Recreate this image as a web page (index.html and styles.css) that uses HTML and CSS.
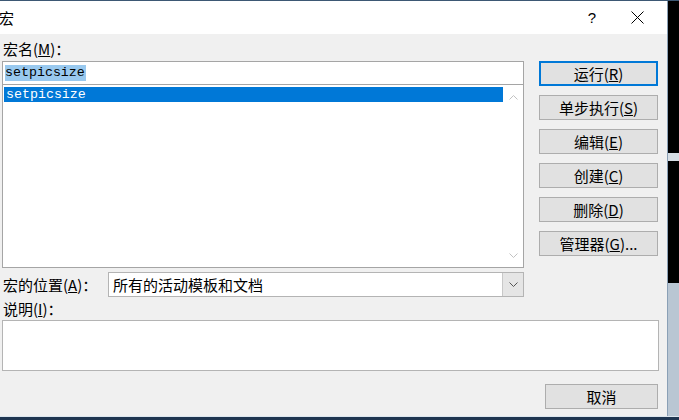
FILE: index.html
```html
<!DOCTYPE html>
<html lang="zh-CN">
    <head>
        <meta charset="utf-8">
        <title>宏</title>
        <link rel="stylesheet" href="styles.css">
    </head>
    <body>
        <div class="screen">
            <div class="dialog">
                <div class="titlebar">
                    <span class="title">宏</span>
                    <span class="help">?</span>
                    <span class="close">
                        <svg width="13" height="13" viewBox="0 0 13 13"><path d="M0.5 0.5 L12.5 12.5 M12.5 0.5 L0.5 12.5" stroke="#000" stroke-width="1" fill="none"/></svg>
                    </span>
                </div>

                <div class="content">
                    <div class="top">
                        <div class="left">
                            <div class="label label-name">宏名(<u>M</u>)：</div>
                            <div class="input">
                                <span class="sel-text">setpicsize</span>
                            </div>
                            <div class="list">
                                <div class="list-items">
                                    <div class="list-row selected">setpicsize</div>
                                </div>
                                <div class="scrollbar">
                                    <svg class="arrow" width="9" height="5" viewBox="0 0 9 5"><path d="M0.5 4.5 L4.5 0.5 L8.5 4.5" stroke="#c2c2c2" fill="none"/></svg>
                                    <svg class="arrow" width="9" height="5" viewBox="0 0 9 5"><path d="M0.5 0.5 L4.5 4.5 L8.5 0.5" stroke="#c2c2c2" fill="none"/></svg>
                                </div>
                            </div>
                            <div class="location">
                                <span class="label">宏的位置(<u>A</u>)：</span>
                                <div class="combo">
                                    <span class="combo-text">所有的活动模板和文档</span>
                                    <span class="combo-btn">
                                        <svg width="9" height="5" viewBox="0 0 9 5"><path d="M0.5 0.5 L4.5 4.5 L8.5 0.5" stroke="#555" fill="none"/></svg>
                                    </span>
                                </div>
                            </div>
                        </div>

                        <div class="buttons">
                            <button class="btn default">运行(<u>R</u>)</button>
                            <button class="btn">单步执行(<u>S</u>)</button>
                            <button class="btn">编辑(<u>E</u>)</button>
                            <button class="btn">创建(<u>C</u>)</button>
                            <button class="btn">删除(<u>D</u>)</button>
                            <button class="btn">管理器(<u>G</u>)...</button>
                        </div>
                    </div>

                    <div class="label label-desc">说明(<u>I</u>)：</div>
                    <div class="desc"></div>

                    <div class="footer">
                        <button class="btn cancel">取消</button>
                    </div>
                </div>
            </div>

            <div class="backdrop">
                <div class="backdrop-dark"></div>
                <div class="backdrop-light"></div>
            </div>
        </div>
        <div class="taskbar"></div>
    </body>
</html>
```

FILE: styles.css
```css
/* 全体 */
body {
    margin: 0;
    padding: 0;
    width: 679px;
    height: 420px;
    overflow: hidden;
    background: #1e3550;
    font-family: "Noto Sans CJK SC", sans-serif;
    font-size: 15px;
    color: #000;
}

.screen {
    display: flex;
    height: 416px;
    border-top: 1px solid #3d5874;
    box-sizing: border-box;
}

/* ダイアログ */
.dialog {
    width: 668px;
    background: #f0f0f0;
    border-right: 1px solid #8aa0b6;
    box-sizing: border-box;
    display: flex;
    flex-direction: column;
}

.titlebar {
    height: 33px;
    background: #fff;
    display: flex;
    align-items: center;
    flex-shrink: 0;
}

.title {
    font-size: 15px;
    margin-left: -1px;
    flex: 1;
}

.help {
    font-family: "Liberation Sans", sans-serif;
    font-size: 15px;
    width: 60px;
    text-align: center;
    margin-right: 2px;
}

.close {
    width: 26px;
    margin-right: 17px;
    display: flex;
    justify-content: center;
}

.content {
    flex: 1;
    display: flex;
    flex-direction: column;
}

.top {
    display: flex;
    gap: 15px;
}

.left {
    width: 522px;
    margin-left: 2px;
}

.label {
    line-height: 17px;
    padding-left: 1px;
}

.label-name {
    height: 27px;
    padding-top: 6px;
    box-sizing: border-box;
}

/* 入力 */
.input {
    height: 23px;
    background: #fff;
    border: 1px solid #a5a5a5;
    border-bottom: none;
    box-sizing: border-box;
    display: flex;
    align-items: center;
    padding-left: 2px;
}

.sel-text {
    font-family: "Liberation Mono", monospace;
    font-size: 13.3px;
    line-height: 16px;
    background: #99c9ef;
    padding-right: 1px;
}

.list {
    height: 184px;
    background: #fff;
    border: 1px solid #a5a5a5;
    box-sizing: border-box;
    display: flex;
}

.list-items {
    flex: 1;
    padding: 2px 0 0 1px;
}

.list-row {
    font-family: "Liberation Mono", monospace;
    font-size: 13.3px;
    line-height: 15px;
    padding-left: 2px;
}

.list-row.selected {
    background: #0078d7;
    color: #fff;
}

.scrollbar {
    width: 20px;
    display: flex;
    flex-direction: column;
    justify-content: space-between;
    align-items: center;
    padding: 10px 0 9px;
}

/* 場所 */
.location {
    display: flex;
    align-items: center;
    margin-top: 4px;
    height: 25px;
}

.location .label {
    width: 105px;
}

.combo {
    flex: 1;
    height: 25px;
    background: #fff;
    border: 1px solid #b4b4b4;
    box-sizing: border-box;
    display: flex;
    align-items: center;
}

.combo-text {
    flex: 1;
    padding-left: 4px;
    font-size: 15px;
}

.combo-btn {
    width: 20px;
    height: 23px;
    background: #e5e5e5;
    border-left: 1px solid #c8c8c8;
    display: flex;
    align-items: center;
    justify-content: center;
}

/* ボタン */
.buttons {
    display: flex;
    flex-direction: column;
    gap: 9px;
    margin-top: 27px;
    width: 119px;
}

.btn {
    height: 25px;
    background: #e1e1e1;
    border: 1px solid #adadad;
    font-family: "Noto Sans CJK SC", sans-serif;
    font-size: 15px;
    color: #000;
    padding: 0;
    line-height: 17px;
}

.btn.default {
    border: 2px solid #0078d7;
}

.label-desc {
    height: 23px;
    display: flex;
    align-items: center;
    padding-left: 3px;
}

.desc {
    height: 51px;
    width: 657px;
    margin-left: 2px;
    background: #fff;
    border: 1px solid #b4b4b4;
    box-sizing: border-box;
}

.footer {
    display: flex;
    justify-content: flex-end;
    padding: 13px 9px 0 0;
}

.cancel {
    width: 113px;
}

/* 背景 */
.backdrop {
    flex: 1;
    display: flex;
    flex-direction: column;
}

.backdrop-dark {
    height: 282px;
    background: #000;
    background-image: linear-gradient(#000 152px, #d6dde4 152px, #d6dde4 160px, #000 160px);
}

.backdrop-light {
    flex: 1;
    background: #b9c6d3;
}

.taskbar {
    height: 4px;
    border-top: 1px solid #dce6ee;
    background: #1e3550;
    box-sizing: border-box;
}
```
